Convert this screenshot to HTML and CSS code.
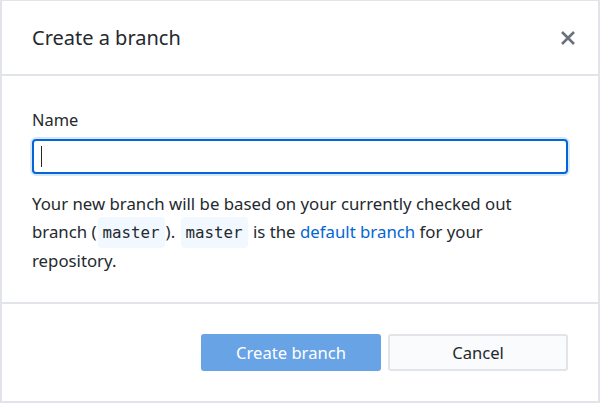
FILE: index.html
```html
<!DOCTYPE html>
<html>
<head>
<meta charset="utf-8">
<link rel="stylesheet" href="styles.css">
</head>
<body>
<div class="dialog">
  <header class="header">
    <h1 class="title">Create a branch</h1>
    <button class="close" aria-label="Close">
      <svg width="16" height="16" viewBox="0 0 16 16"><path d="M2 2 L14 14 M14 2 L2 14" stroke="#6a737d" stroke-width="2.6" stroke-linecap="butt"/></svg>
    </button>
  </header>
  <div class="content">
    <label class="label" for="name">Name</label>
    <div class="input"><span class="caret"></span></div>
    <p class="desc">Your new branch will be based on your currently checked out branch (<code class="ref">master</code>). <code class="ref">master</code> is the <a class="link" href="#">default branch</a> for your repository.</p>
  </div>
  <footer class="footer">
    <button class="btn primary">Create branch</button>
    <button class="btn">Cancel</button>
  </footer>
</div>
</body>
</html>
```
FILE: styles.css
```css
* { box-sizing: border-box; }
html, body { margin: 0; padding: 0; background: #fff; }
body { font-family: "Noto Sans", "Open Sans", sans-serif; color: #24292e; }
.dialog {
  width: 600px; height: 403px;
  border: 2px solid #e1e4e8; border-top-width: 1px;
  display: flex; flex-direction: column;
}
.header {
  height: 75px; flex: none;
  display: flex; align-items: center; justify-content: space-between;
  padding: 0 18px 0 30px;
  border-bottom: 2px solid #e1e4e8;
}
.title { margin: 0; font-size: 20px; font-weight: 400; color: #24292e; }
.close { border: 0; background: none; padding: 0; width: 24px; height: 24px; display: flex; align-items: center; justify-content: center; }
.content { padding: 33px 30px 0 30px; flex: 1; border-bottom: 2px solid #e1e4e8; }
.label { display: block; font-size: 16.4px; line-height: 22px; color: #24292e; }
.input {
  margin-top: 8px; height: 35px; width: 536px;
  border: 2px solid #0366d6; border-radius: 4px;
  box-shadow: 0 0 0 2px rgba(3,102,214,0.15);
  display: flex; align-items: center; padding-left: 7px;
}
.caret { width: 1px; height: 21px; background: #24292e; }
.desc { margin: 16px 0 0; font-size: 16.8px; line-height: 28px; color: #24292e; width: 496px; }
.ref {
  font-family: "DejaVu Sans Mono", "Liberation Mono", monospace; font-size: 15.8px;
  background: #f1f8ff; border-radius: 4px; padding: 6px 5px; margin: 0 1px;
}
.link { color: #0366d6; text-decoration: none; }
.footer {
  height: 97px; flex: none;
  display: flex; justify-content: flex-end; align-items: flex-start; gap: 7px;
  padding: 30px 30px 0 0;
}
.btn {
  width: 180px; height: 37px;
  font-family: inherit; font-size: 16.6px; color: #24292e;
  background: #fafbfc; border: 2px solid #e1e4e8; border-radius: 3px;
}
.btn.primary { background: #68a3e6; border-color: #68a3e6; color: #fff; }
```
